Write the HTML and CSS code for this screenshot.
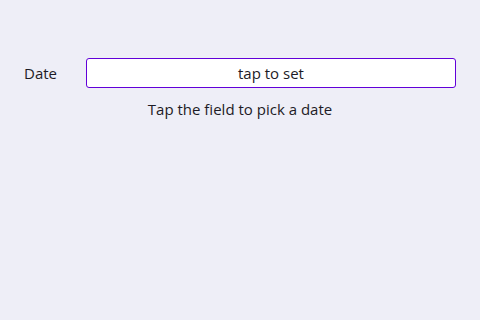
FILE: index.html
```html
<!DOCTYPE html>
<html>
<head>
<meta charset="utf-8">
<link rel="stylesheet" href="styles.css">
</head>
<body>
<div class="page">
  <div class="row">
    <span class="label">Date</span>
    <div class="field">tap to set</div>
  </div>
  <p class="hint">Tap the field to pick a date</p>
</div>
</body>
</html>
```
FILE: styles.css
```css
html, body {
  margin: 0;
  padding: 0;
  width: 480px;
  height: 320px;
  background: #eeeef7;
  font-family: "Open Sans", "Noto Sans", sans-serif;
  color: #1d1b26;
}
.page {
  padding: 58px 24px 0 24px;
}
.row {
  display: flex;
  align-items: center;
}
.label {
  width: 62px;
  font-size: 15px;
}
.field {
  width: 370px;
  height: 30px;
  box-sizing: border-box;
  border: 1.5px solid #6200d9;
  border-radius: 3px;
  background: #ffffff;
  display: flex;
  align-items: center;
  justify-content: center;
  font-size: 15px;
}
.hint {
  margin: 11px 0 0 0;
  text-align: center;
  font-size: 15px;
  line-height: 20px;
}
```
